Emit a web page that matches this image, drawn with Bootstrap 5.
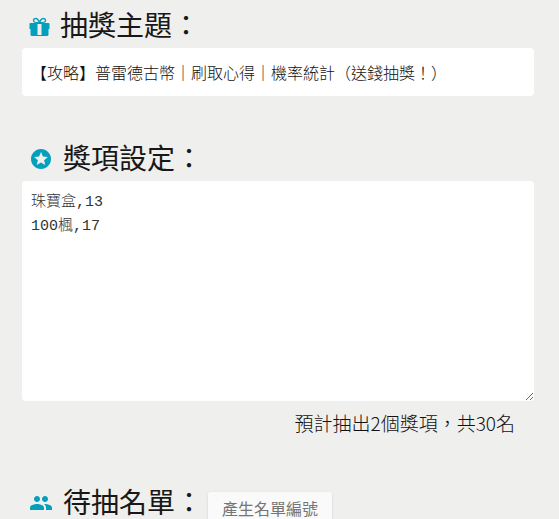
<!DOCTYPE html>
<html lang="zh-Hant">
<head>
<meta charset="utf-8">
<meta name="viewport" content="width=device-width, initial-scale=1">
<title>抽獎</title>
<link href="https://cdn.jsdelivr.net/npm/bootstrap@5.3.0/dist/css/bootstrap.min.css" rel="stylesheet">
<style>
html { scrollbar-width: none; }
html::-webkit-scrollbar { display: none; }
body { background: #efefed; color: #212121; font-family: "Noto Sans CJK TC", sans-serif; }
.page { padding: 3px 25px 0 22px; }
.block + .block { margin-top: 40px; }
.title { font-size: 28px; line-height: 43px; font-weight: 400; margin-bottom: 2px; color: #181818; }
.title svg { width: 24px; height: 24px; fill: #039fbc; margin: 2px 10px 0 7px; flex: none; }
.title .gift { width: 21px; }
.field { border: 0; border-radius: 4px; color: #111; background: #fff; font-weight: 300; padding: 12px 9px; }
.topic { font-size: 16px; line-height: 24px; height: 48px; }
.prizes { font-family: "Liberation Mono", "Noto Sans CJK TC", monospace; font-size: 15px; line-height: 24px; height: 220px; padding: 10px 9px; resize: vertical; color: #333; }
.summary { font-size: 19px; line-height: 28px; font-weight: 300; padding: 0 19px 2px 0; color: #111; }
.gen { background: #fafafa; color: #757575; border: 0; border-radius: 2px; font-size: 16px; line-height: 24px; padding: 4px 14px; box-shadow: 0 1px 3px rgba(0,0,0,.12); margin: 13px 0 0 5px; }
.gen:hover { background: #fff; color: #616161; }
</style>
</head>
<body>
<main class="page">
  <section class="block">
    <label for="topic" class="title d-flex align-items-center">
      <svg class="gift" viewBox="0 0 21 24" aria-hidden="true"><path fill-rule="evenodd" d="M1.5 9H7.2C4.9 8.9 3.8 7.8 3.8 6.3 3.8 4.7 5 3.8 6.8 3.8 8.5 3.8 9.6 5.2 10.5 6.7 11.4 5.2 12.5 3.8 14.2 3.8 16 3.8 17.2 4.7 17.2 6.3 17.2 7.8 16.1 8.9 13.8 9H19.5Q20.5 9 20.5 10V15H19.5V20.5Q19.5 22 18 22H3Q1.5 22 1.5 20.5V15H.5V10Q.5 9 1.5 9ZM9.5 8C8.7 6.6 7.8 5.2 6.8 5.2 5.8 5.2 5.2 5.6 5.2 6.4 5.2 7.5 6.4 8 9.5 8ZM11.5 8C14.6 8 15.8 7.5 15.8 6.4 15.8 5.6 15.2 5.2 14.2 5.2 13.2 5.2 12.3 6.6 11.5 8ZM8.5 10V21H12.5V10Z"/></svg>
      <span>抽獎主題：</span>
    </label>
    <input id="topic" type="text" class="form-control field topic" value="【攻略】普雷德古幣｜刷取心得｜機率統計（送錢抽獎！）">
  </section>
  <section class="block">
    <label for="prizes" class="title d-flex align-items-center">
      <svg viewBox="0 0 24 24" aria-hidden="true"><path d="M11.99 2C6.47 2 2 6.48 2 12s4.47 10 9.99 10C17.52 22 22 17.52 22 12S17.52 2 11.99 2zm4.24 16L12 15.45 7.77 18l1.12-4.81-3.73-3.23 4.92-.42L12 5l1.92 4.53 4.92.42-3.73 3.23L16.23 18z"/></svg>
      <span>獎項設定：</span>
    </label>
    <textarea id="prizes" class="form-control field prizes" spellcheck="false">珠寶盒,13
100楓,17</textarea>
    <div class="summary text-end mt-2">預計抽出2個獎項，共30名</div>
  </section>
  <section class="block">
    <div class="title d-flex align-items-center">
      <svg viewBox="0 0 24 24" aria-hidden="true"><path d="M16 11c1.66 0 2.99-1.34 2.99-3S17.66 5 16 5c-1.66 0-3 1.34-3 3s1.34 3 3 3zm-8 0c1.66 0 2.99-1.34 2.99-3S9.66 5 8 5C6.34 5 5 6.34 5 8s1.34 3 3 3zm0 2c-2.33 0-7 1.17-7 3.5V19h14v-2.5c0-2.33-4.67-3.5-7-3.5zm8 0c-.29 0-.62.02-.97.05 1.16.84 1.97 1.97 1.97 3.45V19h6v-2.5c0-2.33-4.67-3.5-7-3.5z"/></svg>
      <span>待抽名單：</span>
      <button type="button" class="btn gen">產生名單編號</button>
    </div>
  </section>
</main>
<script src="https://cdn.jsdelivr.net/npm/bootstrap@5.3.0/dist/js/bootstrap.bundle.min.js"></script>
</body>
</html>
